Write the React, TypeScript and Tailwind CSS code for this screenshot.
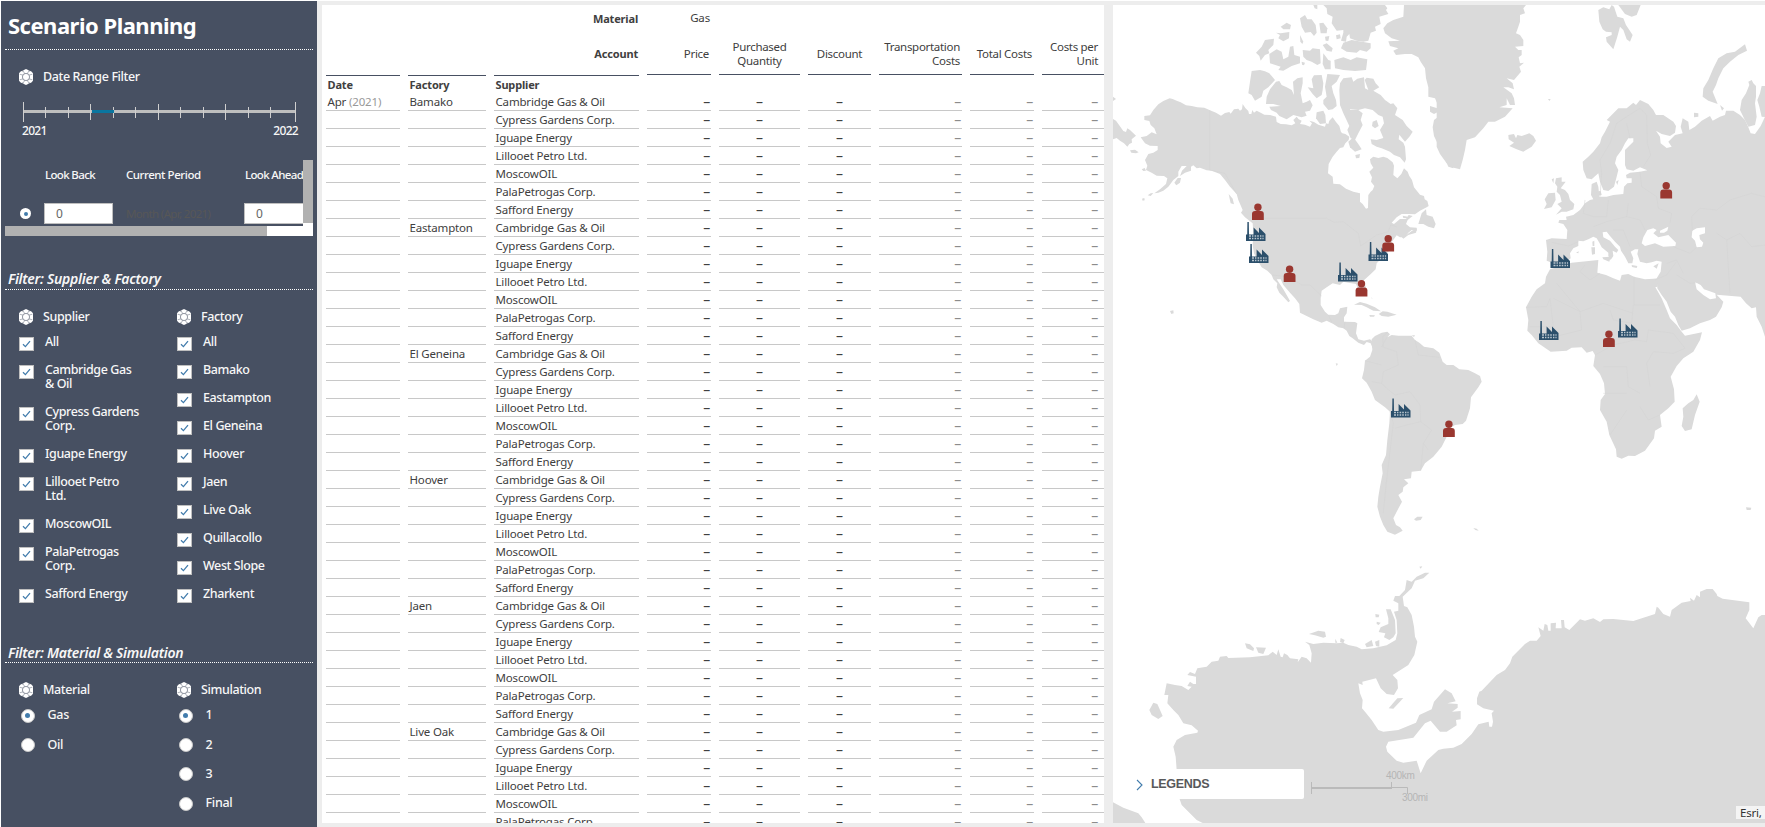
import React from "react";

const suppliers = [
  "Cambridge Gas & Oil",
  "Cypress Gardens Corp.",
  "Iguape Energy",
  "Lillooet Petro Ltd.",
  "MoscowOIL",
  "PalaPetrogas Corp.",
  "Safford Energy",
];

const factories = ["Bamako", "Eastampton", "El Geneina", "Hoover", "Jaen", "Live Oak"];

const supplierOptions: string[][] = [
  ["All"],
  ["Cambridge Gas", "& Oil"],
  ["Cypress Gardens", "Corp."],
  ["Iguape Energy"],
  ["Lillooet Petro", "Ltd."],
  ["MoscowOIL"],
  ["PalaPetrogas", "Corp."],
  ["Safford Energy"],
];

const factoryOptions: string[][] = [
  ["All"],
  ["Bamako"],
  ["Eastampton"],
  ["El Geneina"],
  ["Hoover"],
  ["Jaen"],
  ["Live Oak"],
  ["Quillacollo"],
  ["West Slope"],
  ["Zharkent"],
];

const rows = factories
  .flatMap((factory) => suppliers.map((supplier, i) => ({ factory: i === 0 ? factory : "", supplier })))
  .slice(0, 41);

const GRID =
  "grid grid-cols-[74px_78px_145px_64px_81px_63px_83px_64px_62px] gap-x-2";

function DimensionIcon() {
  return (
    <svg width="14" height="16" viewBox="0 0 14 16" className="shrink-0">
      <path d="M7 0 9.6 1.3 12.4 2.6 14 4.2V11.8L12.4 13.4 9.6 14.7 7 16 4.4 14.7 1.6 13.4 0 11.8V4.2L1.6 2.6 4.4 1.3Z" fill="#fff" />
      <g stroke="#475062" fill="none">
        <circle cx="7" cy="8" r="3.6" strokeWidth="0.7" strokeOpacity="0.85" />
        <path d="M3.9 6.1 0.6 5.2M10.1 6.1 13.4 5.2M3.9 9.9 0.6 10.8M10.1 9.9 13.4 10.8M5.6 4.6 4.6 2.6M8.4 4.6 9.4 2.6M5.6 11.4 4.6 13.4M8.4 11.4 9.4 13.4" strokeWidth="0.55" strokeOpacity="0.8" />
      </g>
      <g fill="#475062">
        <path d="M3.6 0.6 5 2.6 3 2.6ZM10.4 0.6 9 2.6 11 2.6ZM3.6 15.4 5 13.4 3 13.4ZM10.4 15.4 9 13.4 11 13.4Z" fillOpacity="0.6" />
      </g>
    </svg>
  );
}

function FilterTitle({ children }: { children: React.ReactNode }) {
  return (
    <div className="flex h-4 items-center gap-2.5">
      <DimensionIcon />
      <span className="pt-px text-[12.5px] font-medium tracking-[-0.38px] whitespace-nowrap">{children}</span>
    </div>
  );
}

function CheckOption({ lines }: { lines: string[] }) {
  return (
    <div className="flex gap-[11px] pb-3.5">
      <span className="mt-0.5 -mb-0.5 flex h-3.5 w-[15px] shrink-0 items-center justify-center border border-[#bfbfbf] bg-white">
        <svg width="9" height="8" viewBox="0 0 9 8">
          <path d="M1 4.3 3.4 6.6 8 1.2" fill="none" stroke="#427cac" strokeWidth="1.3" />
        </svg>
      </span>
      <div className="text-[12.5px] leading-[14px] font-medium tracking-[-0.4px] whitespace-nowrap">
        {lines.map((l) => (
          <div key={l}>{l}</div>
        ))}
      </div>
    </div>
  );
}

function RadioOption({ label, on }: { label: string; on?: boolean }) {
  return (
    <div className="flex h-[29.3px] items-center gap-[13px] pl-[1.5px]">
      <span className="flex size-[14px] items-center justify-center rounded-full border border-[#c8c8c8] bg-white">
        {on && <span className="size-[5px] rounded-full bg-[#427cac]" />}
      </span>
      <span className="text-[12.5px] font-medium tracking-[-0.3px]">{label}</span>
    </div>
  );
}

const ticks = [0, 22, 45, 67, 90, 112, 135, 157, 180, 202, 225, 247, 272];

function Sidebar() {
  return (
    <aside className="flex w-[316px] shrink-0 flex-col bg-[#475062] text-[#f7f7f7]">
      <div className="mx-1 flex h-[49px] shrink-0 items-center border-b border-dotted border-white pl-[3px]">
        <h1 className="text-[22px] font-bold tracking-[-0.5px] text-white">Scenario Planning</h1>
      </div>
      <div className="mt-[19px] pl-[18px]">
        <FilterTitle>Date Range Filter</FilterTitle>
      </div>
      <svg width="274" height="20" viewBox="0 0 274 20" className="mt-[17px] ml-[22px] shrink-0">
        <rect x="0" y="8" width="273" height="3" fill="#bfbfbf" />
        {ticks.map((x, i) => {
          const edge = i === 0 || i === 12;
          const major = i % 3 === 0;
          return (
            <rect key={x} x={x} y={edge ? 0 : major ? 2 : 5} width="1" height={edge ? 20 : major ? 16 : 11} fill="#cfcfcf" />
          );
        })}
        <rect x="69" y="8" width="22" height="3" fill="#0a76a0" />
      </svg>
      <div className="flex h-4 items-center justify-between pt-0.5 pr-[19px] pl-[21px] text-xs font-medium tracking-[-0.7px]">
        <span>2021</span>
        <span>2022</span>
      </div>
      <div className="mx-1 mt-[22px] flex h-[76px] shrink-0 flex-col">
        <div className="flex h-[66px]">
          <div className="w-[298px] overflow-hidden whitespace-nowrap">
            <div className="flex h-[26px] items-center pt-[3px] text-[11.5px] font-medium tracking-[-0.65px]">
              <span className="w-[81px] shrink-0 pl-10"><span>Look Back</span></span>
              <span className="ml-10 w-[119px] shrink-0 tracking-[-0.45px]">Current Period</span>
              <span className="shrink-0">Look Ahead</span>
            </div>
            <div className="mt-[17px] flex items-center text-xs">
              <span className="ml-[15px] flex size-[11px] shrink-0 items-center justify-center rounded-full bg-white">
                <span className="size-1 rounded-full bg-[#427cac]" />
              </span>
              <span className="ml-[13px] flex h-[21px] w-[69px] shrink-0 items-center border border-[#bfbfbf] bg-white pl-[11px] text-[#666]">
                0
              </span>
              <span className="ml-[13px] w-[118px] shrink-0 text-[11.5px] tracking-[-0.65px] text-[#575757]">Month (Apr, 2021)</span>
              <span className="flex h-[21px] w-[69px] shrink-0 items-center border border-[#bfbfbf] bg-white pl-[11px] text-[#666]">
                0
              </span>
            </div>
          </div>
          <div className="flex w-2.5 flex-col bg-white">
            <div className="h-[63px] bg-[#b1b1b1]" />
          </div>
        </div>
        <div className="h-2.5 bg-white">
          <div className="h-2.5 w-[262px] bg-[#b1b1b1]" />
        </div>
      </div>
      <div className="mx-1 flex h-[54px] shrink-0 items-end border-b border-dotted border-white pl-[3px]">
        <h2 className="text-sm leading-5 font-semibold tracking-[-0.27px] italic">Filter: Supplier &amp; Factory</h2>
      </div>
      <div className="flex h-[350px] shrink-0 pt-[19px] pl-[18px]">
        <div className="w-[158px]">
          <FilterTitle>Supplier</FilterTitle>
          <div className="mt-2.5">
            {supplierOptions.map((lines) => (
              <CheckOption key={lines[0]} lines={lines} />
            ))}
          </div>
        </div>
        <div>
          <FilterTitle>Factory</FilterTitle>
          <div className="mt-2.5">
            {factoryOptions.map((lines) => (
              <CheckOption key={lines[0]} lines={lines} />
            ))}
          </div>
        </div>
      </div>
      <div className="mx-1 flex h-[23px] shrink-0 items-end border-b border-dotted border-white pl-[3px]">
        <h2 className="text-sm leading-[18px] font-semibold tracking-[-0.27px] italic">Filter: Material &amp; Simulation</h2>
      </div>
      <div className="flex pt-[19px] pl-[18px]">
        <div className="w-[158px]">
          <FilterTitle>Material</FilterTitle>
          <div className="mt-[3px]">
            <RadioOption label="Gas" on />
            <RadioOption label="Oil" />
          </div>
        </div>
        <div>
          <FilterTitle>Simulation</FilterTitle>
          <div className="mt-[3px]">
            <RadioOption label="1" on />
            <RadioOption label="2" />
            <RadioOption label="3" />
            <RadioOption label="Final" />
          </div>
        </div>
      </div>
    </aside>
  );
}

function DataTable() {
  const head = "border-b border-[#475062] flex items-center h-[38px] leading-[14px] tracking-[-0.3px]";
  const cell = "border-b border-[#c8c8c8] h-[18px]";
  const dash = `${cell} text-sm leading-[18px]`;
  return (
    <section className="mt-1 ml-[5px] h-[818px] w-[782px] shrink-0 overflow-hidden bg-white pl-1 text-[11.5px] leading-[18px] tracking-[-0.17px] whitespace-nowrap text-[#404040]">
      <div className={`${GRID} h-8 pt-1`}>
        <div className="col-span-3 pr-px pt-px text-right text-[11px] font-bold">Material</div>
        <div className="pr-px text-right">Gas</div>
      </div>
      <div className={GRID}>
        <div className="col-span-3 grid grid-cols-[74px_78px_145px] gap-x-2">
          <div className="h-[39px] border-b border-[#475062]" />
          <div className="h-[39px] border-b border-[#475062]" />
          <div className="flex h-[39px] items-center justify-end border-b border-[#475062] pr-px pb-[5px] text-[11px] font-bold">Account</div>
        </div>
        <div className={`${head} justify-end pr-0.5 pb-1`}>Price</div>
        <div className={`${head} justify-center pb-1 text-center`}>Purchased<br />Quantity</div>
        <div className={`${head} justify-center pb-1`}>Discount</div>
        <div className={`${head} justify-end pr-0.5 pb-1 text-right`}>Transportation<br />Costs</div>
        <div className={`${head} justify-end pr-0.5 pb-1`}>Total Costs</div>
        <div className={`${head} justify-end pr-1.5 pb-1 text-right`}>Costs per<br />Unit</div>
      </div>
      <div className={`${GRID} h-[17px] text-[11px] leading-[17px] font-bold`}>
        <div className="pl-[1.5px]">Date</div>
        <div className="pl-[1.5px]">Factory</div>
        <div className="pl-[1.5px]">Supplier</div>
      </div>
      {rows.map((r, i) => (
        <div key={i} className={GRID}>
          <div className={`${cell} pl-[1.5px]`}>
            {i === 0 && (
              <>
                Apr <span className="text-[#999]">(2021)</span>
              </>
            )}
          </div>
          <div className={`${cell} pl-[1.5px]`}>{r.factory}</div>
          <div className={`${cell} pl-[1.5px]`}>{r.supplier}</div>
          <div className={`${dash} pr-px text-right`}>–</div>
          <div className={`${dash} text-center`}>–</div>
          <div className={`${dash} text-center`}>–</div>
          <div className={`${dash} pr-px text-right text-[#8c8c8c]`}>–</div>
          <div className={`${dash} pr-px text-right text-[#8c8c8c]`}>–</div>
          <div className={`${dash} pr-1.5 text-right text-[#8c8c8c]`}>–</div>
        </div>
      ))}
    </section>
  );
}

const americaNorth = [
  // mainland
  "179,295 188,297 200,302 212,307 228,316 245,318 262,322 283,323 300,331 318,338 333,347 345,339 358,336 362,341 372,328 385,326 390,332 396,328 398,312 406,324 415,333 417,342 424,342 427,330 432,338 440,332 452,338 463,344 480,345 498,350 500,366 512,372 528,373 545,376 556,370 550,360 560,350 566,358 575,362 570,372 585,374 600,380 606,370 598,362 612,366 625,374 645,380 648,370 655,372 658,362 668,352 678,366 688,378 693,396 697,400 706,402 718,410 716,420 706,430 700,442 690,444 680,455 668,470 656,492 654,520 668,530 670,551 690,553 708,566 730,575 750,580 750,605 758,612 768,626 774,624 775,585 782,575 788,570 793,558 783,545 786,532 778,515 790,503 782,490 780,478 790,470 805,474 820,470 832,474 848,487 852,497 850,525 862,535 874,522 882,505 893,515 898,528 906,540 912,562 924,577 930,584 942,588 944,598 952,603 956,618 950,622 930,632 915,643 895,642 875,642 860,652 845,668 852,672 870,657 888,657 896,645 908,648 893,660 888,672 900,682 920,683 920,693 905,690 895,698 885,712 870,712 860,706 848,722 836,735 830,748 838,752 825,765 800,790 797,808 780,824 760,842 768,862 770,880 765,888 755,885 745,868 738,852 715,848 700,845 690,855 668,850 650,862 635,872 632,895 632,915 645,935 655,944 675,945 685,940 690,925 712,920 710,940 702,952 702,965 735,966 742,970 738,1000 745,1018 762,1022 780,1018 795,1030 788,1045 782,1030 770,1026 762,1035 745,1028 728,1015 718,1008 710,992 700,985 685,982 670,972 650,962 635,968 610,958 590,948 570,938 568,912 555,895 540,878 520,855 512,838 500,838 508,850 520,868 530,885 540,903 535,907 520,890 508,878 500,862 502,850 490,838 485,825 472,812 455,802 445,785 432,760 428,735 430,700 428,670 405,652 393,638 398,630 385,600 380,582 360,560 345,540 330,522 305,512 290,511 270,503 260,505 250,496 243,500 243,512 225,518 210,528 216,512 230,498 215,498 205,515 205,528 190,540 175,560 160,572 145,578 133,580 150,568 168,552 172,535 162,528 140,527 125,518 108,510 112,497 105,480 115,462 130,458 143,450 143,438 120,437 105,430 92,412 110,408 125,397 140,403 133,385 122,375 118,363 103,360 103,348 120,346 130,330 145,313 160,303",
  "9,357 18,362 25,372 40,393 48,396 52,385 60,390 78,407 65,418 66,428 58,432 52,440 42,430 30,422 20,414 9,418",
  "9,290 18,297 9,303",
  "60,451 75,449 86,457 78,460 64,458",
  "95,508 104,504 108,512 100,513",
  "113,586 122,580 130,579 122,588",
  "96,596 103,594 104,601 98,602",
  "193,548 203,534 213,534 210,548 199,556",
  "180,933 190,931 191,940 184,942",
  "356,582 368,596 372,613 362,610",
  // Banks and Victoria
  "425,213 450,210 465,214 478,220 495,240 475,262 460,272 455,290 435,302 425,285 415,280 420,245",
  "480,268 498,245 508,243 515,255 530,262 545,270 552,285 549,245 562,235 578,232 578,250 572,280 578,310 590,305 600,300 608,316 600,332 585,335 590,347 575,352 550,345 530,358 508,348 500,338 483,330 478,320 512,318 490,312 468,312 470,290",
  "593,262 610,265 605,238 612,226 635,225 640,250 638,270 635,285 620,295 608,282",
  "652,222 690,225 680,245 665,258 670,280 678,300 680,318 668,328 655,330 640,312 640,300 650,290 645,260",
  "620,337 640,332 646,345 648,370 630,372 618,355",
  // Baffin
  "690,250 700,235 725,232 730,245 742,236 762,232 765,265 775,270 764,240 770,233 790,236 797,250 808,262 790,272 812,285 825,300 842,312 850,310 862,325 855,345 878,360 890,378 908,395 900,408 885,425 868,404 866,418 880,428 885,440 888,478 884,488 870,472 852,465 840,455 815,445 800,440 785,432 782,418 800,420 820,414 810,390 822,370 818,350 805,345 788,330 765,325 745,330 720,328 725,375 718,378 700,340 690,315 688,270",
  "712,330 745,330 758,340 752,360 758,375 745,400 735,420 722,415 712,390 722,370",
  "715,425 730,412 745,432 755,448 735,455 720,442",
  "788,365 800,360 806,378 795,385 786,378",
  "736,465 750,462 748,474 738,475",
  // Devon, Ellesmere and the Queen Elizabeth group
  "673,180 700,172 722,180 740,172 772,178 770,195 768,210 735,213 700,210 675,205",
  "640,15 825,15 832,25 828,30 835,42 808,50 812,72 795,80 798,92 782,98 775,122 760,125 740,122 720,115 718,102 710,110 708,125 693,122 700,98 700,90 680,92 665,70 668,50 652,42 650,25",
  "700,128 725,120 782,130 782,145 770,155 750,150 740,158 710,155 693,145",
  "570,55 585,45 592,58 605,58 617,75 620,98 612,108 602,96 585,98 575,80",
  "512,80 530,68 543,75 540,88 520,88",
  "498,98 512,100 538,96 537,115 520,124 505,115 510,105",
  "438,158 455,140 465,120 492,116 490,135 475,150 478,160 465,165 452,182 448,168",
  "478,162 500,148 515,155 520,178 535,170 540,140 550,138 553,165 570,170 570,190 545,198 520,212 505,210 512,200 480,190",
  "578,150 600,152 608,145 630,148 632,190 622,195 605,185 590,180 580,170",
  "638,135 650,130 668,145 665,155 650,152",
  "640,160 655,180 662,182 662,208 645,208 638,192",
  "628,70 640,68 652,85 650,100 632,100",
  "570,105 580,125 577,132 571,125",
  "575,185 585,188 582,196 576,194",
  "645,110 658,108 655,123 647,122",
  "610,15 622,15 622,28 614,25",
  "678,106 690,103 692,115 680,118",
  // Newfoundland, Anticosti, Nova Scotia
  "925,672 935,640 948,628 950,645 968,650 977,672 972,685 955,680 940,672",
  "870,706 885,708 905,693 921,685 918,698 895,705 880,716",
  "878,647 893,650 890,655 880,654",
  // west Greenland
  "882,15 880,50 850,60 832,70 820,85 825,100 845,115 870,122 835,124 840,138 865,145 850,152 858,165 885,162 905,162 925,172 932,185 945,205 948,235 955,262 955,290 975,295 985,318 990,340 985,350 972,360 968,382 972,408 985,435 1000,465 1015,500 1030,505 1030,15",
  "960,318 982,325 985,335 972,342 960,335",
];

const eurasia = [
  // east Greenland
  "-10,15 258,15 250,25 255,40 240,45 240,65 235,80 228,100 240,105 250,120 250,138 225,140 235,150 245,150 245,165 236,172 240,190 252,188 238,200 243,215 222,240 200,235 218,250 222,268 205,262 190,262 215,280 222,295 225,315 210,315 200,295 200,315 178,322 218,325 195,350 165,365 145,365 130,385 105,412 80,420 75,450 68,480 60,508 35,502 20,490 0,462 -10,440",
  "205,405 222,402 228,415 232,405 245,408 268,400 280,408 288,422 275,440 250,455 230,448 208,438 222,428 206,418",
  "475,30 490,22 508,28 515,15 522,20 532,50 550,55 558,75 578,105 570,125 560,118 550,90 540,80 532,110 520,148 500,125 498,112 515,105 515,97 498,95 488,88 478,65",
  "535,15 602,15 590,45 575,50 555,42",
  "915,133 921,152 895,165 870,185 850,205 835,235 828,255 818,275 833,312 805,302 788,290 790,265 805,240 820,205 835,175 860,160 885,155",
  "762,338 775,340 775,350 762,352",
  "324,297 332,297 328,303",
  // mainland
  "600,300 625,312 640,330 648,345 670,345 700,365 708,378 705,398 690,408 665,402 648,392 660,410 662,430 680,444 695,440 685,425 705,405 728,400 722,380 728,355 745,365 748,390 765,380 785,362 810,348 818,362 840,350 855,345 858,332 880,332 900,345 915,360 925,382 932,400 945,402 962,378 975,350 985,350 985,1010 975,1010 965,980 950,950 948,922 935,925 918,910 902,890 830,884 850,905 845,922 828,950 810,960 780,970 750,985 725,992 715,975 705,950 692,935 680,905 665,885 652,865 650,835 662,815 665,785 650,782 635,787 620,790 600,785 592,762 595,748 585,748 572,755 580,775 577,790 565,790 555,770 543,752 540,740 525,725 510,708 500,695 488,697 490,712 510,722 525,740 535,750 530,758 518,752 520,768 512,780 505,768 505,758 485,742 478,728 470,715 460,710 445,718 430,724 415,722 415,738 400,745 390,760 392,775 380,785 360,790 340,790 320,782 322,755 318,720 335,715 380,717 382,690 370,672 355,668 358,660 380,660 378,650 400,645 420,630 435,610 450,600 460,598 453,585 455,552 470,545 475,560 478,590 500,590 520,585 550,582 552,560 562,550 575,548 575,535 560,535 558,525 570,518 600,515 622,511 600,502 580,512 560,508 555,495 555,450 580,425 580,415 565,415 555,430 545,450 530,470 525,490 535,510 530,530 522,560 505,573 490,570 480,545 475,520 455,538 440,535 430,510 428,485 445,470 460,455 480,430 485,412 495,395 510,365 500,360 515,345 535,325 560,325 580,308 588,315",
  "900,330 905,300 918,280 928,255 925,245 935,240 940,250 948,258 948,290 945,310 950,350 945,375 925,380 912,355",
  "965,258 985,258 985,352 965,350 958,320 952,300 960,280",
  "840,315 852,325 846,332",
  // British Isles
  "348,535 365,532 365,545 377,545 362,565 375,570 385,582 390,600 403,612 400,628 380,635 365,635 348,644 365,625 352,612 365,605 360,585 350,575 352,560 345,550",
  "325,580 345,578 347,600 335,622 312,627 320,612 314,598",
  "335,538 342,535 340,550",
  // Mediterranean islands and Baltic
  "487,772 512,770 508,785 490,778",
  "454,742 465,742 465,762 456,764",
  "457,725 463,722 463,738 458,738",
  "575,795 592,798 590,804 576,801",
  "640,799 656,790 650,806",
  "408,758 416,754 415,760",
  "470,575 482,572 485,585 473,588",
  "528,545 536,540 532,555",
];

const africa = [
  "150,148 215,128 295,120 292,158 318,165 340,175 360,182 365,165 385,162 402,170 435,178 460,176 475,175 472,200 466,202 485,235 500,270 510,295 530,315 545,335 555,347 606,337 600,360 580,395 550,415 530,438 512,470 522,508 524,545 505,565 480,585 485,620 465,632 462,655 435,692 405,708 385,707 365,716 350,710 348,688 328,645 320,605 300,570 302,540 315,522 312,490 300,462 280,438 285,405 278,393 260,398 245,382 215,383 200,392 152,395 115,370 95,345 82,332 85,300 78,262 95,230 110,208 135,190 138,170",
  "590,523 599,545 585,585 575,628 555,633 545,618 550,590 548,565 565,550 580,540",
];

const americaSouth = [
  "215,118 225,108 245,98 262,95 270,103 262,112 275,105 295,107 335,107 345,120 358,128 372,140 400,145 418,158 428,185 440,195 460,195 478,208 505,210 525,220 540,228 545,245 535,262 513,292 510,325 498,362 488,372 465,375 450,385 440,410 425,440 400,470 375,490 362,512 335,515 333,535 312,538 325,550 310,562 308,575 295,585 306,605 290,635 280,655 288,675 300,682 308,692 285,704 262,695 250,675 240,650 232,620 235,590 240,560 248,520 245,495 258,465 262,420 268,370 270,335 255,322 225,300 215,275 200,248 186,235 192,210 195,182 210,170 217,150",
  "162,14 180,6 200,11 225,22 243,34 220,32 200,22 185,15",
  "236,42 248,34 262,35 290,44 265,50 245,48",
  "208,45 225,46 222,50 210,50",
  "335,106 345,106 342,111",
  "107,190 114,191 110,198",
  "342,658 352,650 368,650 362,660 348,662",
  "520,684 530,686 536,692 526,690",
  "1338,622 1354,623 1352,630 1340,630",
  "212,-8 216,-6 218,-2",
];

const antarctica = [
  "958,98 940,115 915,122 905,145 878,170 882,198 892,202 905,225 912,260 915,290 922,305 913,345 895,375 848,405 862,420 864,445 852,465 830,462 812,445 798,415 757,425 758,435 745,430 750,460 758,480 756,505 765,515 785,540 805,570 820,575 865,570 918,548 928,525 965,508 972,485 1005,448 1025,460 1037,484 1012,490 1043,492 1043,503 1026,515 1052,513 1052,538 1038,540 1040,556 1010,575 990,575 962,542 945,550 910,593 835,605 828,620 832,635 860,662 880,668 920,662 932,700 950,662 985,630 1000,626 1030,623 1055,612 1085,582 1105,553 1136,545 1138,560 1146,560 1149,545 1145,520 1152,512 1120,505 1101,493 1101,475 1108,455 1115,452 1160,405 1185,390 1200,370 1207,350 1245,312 1260,302 1280,302 1292,288 1285,262 1300,272 1304,252 1312,255 1315,272 1322,272 1322,250 1338,248 1337,265 1355,265 1353,240 1362,240 1364,262 1378,270 1410,238 1425,242 1450,235 1470,246 1480,238 1510,237 1570,243 1635,222 1640,200 1645,203 1660,222 1680,230 1685,210 1715,188 1742,183 1740,173 1752,182 1760,165 1770,172 1770,155 1790,147 1808,147 1820,162 1822,168 1838,176 1918,187 1918,210 1907,235 1930,265 1945,232 1955,225 1975,225 1975,860 300,860 260,840 215,795 208,775 200,690 197,650 190,620 200,600 225,585 262,578 264,572 245,556 220,550 205,525 190,510 172,490 175,465 163,465 170,430 195,435 215,438 235,450 245,440 232,438 240,425 250,432 258,432 258,410 232,405 240,396 255,402 262,385 290,380 305,365 325,362 330,350 350,348 355,354 420,352 475,346 488,335 500,345 505,328 512,350 518,352 522,340 532,345 540,355 565,358 563,367 575,350 590,355 603,368 605,340 598,315 585,305 610,312 640,308 680,310 700,308 715,315 740,320 755,328 790,325 830,316 857,300 862,280 860,240 852,215 865,212 865,190 850,182 855,168 868,168 885,150 890,120 905,125 920,110 945,98",
  "118,510 130,488 142,492 158,528 145,537 125,525",
  "405,310 420,313 432,325 430,333 410,325",
  "438,322 468,323 460,342 445,338",
  "597,282 625,272 645,275 648,290 640,293 615,286",
  "836,505 862,475 880,474 850,506",
  "828,208 842,208 855,240 857,280 850,292 838,300 822,292 826,280 806,276 812,262 835,252 835,235",
  "796,222 808,224 806,232 797,232",
  "800,245 812,248 806,255 800,252",
  "676,296 682,308 676,308",
  "692,294 704,300 700,310 690,306",
  "765,312 785,300 790,318 770,322",
  "795,305 808,300 808,320 798,318",
  "928,80 937,79 932,86",
  "9,787 40,803 85,820 95,832 108,852 9,852",
];

const inlandWater = [
  "622,690 640,685 650,690 640,700 655,712 685,705 708,728 706,738 670,740 645,730 615,738 605,730 610,712",
  "660,692 685,680 682,692 672,698 660,698",
  "757,692 770,685 795,682 795,700 778,705 780,718 790,728 786,740 770,742 765,722 755,712",
  "765,846 782,855 792,868 805,872 826,880 828,895 810,898 790,885 770,868",
];

const borders: { t: string; d: string }[] = [
  {
    t: "translate(1110 0) scale(.33333)",
    d: "M299 331V510L345 520 380 582M430 655H650L672 667 700 665 745 700 752 738 800 705 835 695 842 675 860 680M485 825 515 828 545 835 575 855 600 855 635 888M655 945 665 965M702 985 705 965M820 1040 818 1010 832 998",
  },
  {
    t: "translate(1440 0) scale(.33333)",
    d: "M480 590 485 520 480 480 510 430 530 370 560 350 600 325 620 345 622 430 632 465 610 500M570 415 560 370M435 600 430 640 460 650 500 650 505 600M460 680 500 665 560 650 565 610M560 650 600 660 615 690M520 690 550 690 570 740M600 515 605 560 650 590 655 625 695 640 690 670M755 650 780 625 830 630 870 600 935 580 975 590M755 650 757 692M830 700 860 720 900 700 935 740 975 735M700 740 750 760 770 742M680 790 710 780 730 820M860 720 865 800 870 880M335 727 385 738 415 725",
  },
  {
    t: "translate(1500 220) scale(.33333)",
    d: "M402 170V255H480M255 135 240 155 270 180 300 160M78 262 140 260 150 235 160 320 90 320M160 235 240 275 310 250 400 280M170 190 240 275M400 255 395 310 340 300 330 270M395 310 405 360 440 365M240 275 245 330 165 350M440 365 445 330 520 340 555 385 520 400 460 395 440 430 450 500M285 405 340 375 405 360M310 440 380 440 385 500 420 520M380 520 310 520M380 570 330 645M420 560 445 600 480 585M465 180 500 165 530 125M530 165 570 190 590 188",
  },
  {
    t: "translate(1300 300) scale(.33333)",
    d: "M262 110 245 140 290 155 295 195 250 215 245 250 215 245M195 182 245 195M345 120 355 165 418 172M245 250 260 265 285 285 330 275 360 315 362 365 395 390 370 430 385 450M270 335 280 370 260 540 250 640M362 365 320 375 285 385M370 430 362 512",
  },
];

const factoryPins = [
  [1246, 222],
  [1249, 244],
  [1338, 262.5],
  [1368.5, 242],
  [1550.5, 249],
  [1539, 321],
  [1618, 318.5],
  [1391, 398.5],
];

const supplierPins = [
  [1252, 203.5],
  [1283.7, 265.5],
  [1382.3, 235],
  [1355.6, 280],
  [1660.3, 182],
  [1603, 330.5],
  [1443, 420.5],
];

function Land({ t, shapes, fill = "#dadada" }: { t: string; shapes: string[]; fill?: string }) {
  return (
    <g transform={t} fill={fill}>
      {shapes.map((p, i) => (
        <polygon key={i} points={p} />
      ))}
    </g>
  );
}

function WorldMap() {
  return (
    <svg width="652" height="818" viewBox="1113 5 652 818" className="block">
      <Land t="translate(1110 0) scale(.33333)" shapes={americaNorth} />
      <Land t="translate(1300 300) scale(.33333)" shapes={americaSouth} />
      <Land t="translate(1440 0) scale(.33333)" shapes={eurasia} />
      <Land t="translate(1500 220) scale(.33333)" shapes={africa} />
      <Land t="translate(1110 540) scale(.33333)" shapes={antarctica} />
      <Land t="translate(1440 0) scale(.33333)" shapes={inlandWater} fill="#fff" />
      <g fill="none" stroke="#d4d4d4" strokeWidth="1.6" strokeLinejoin="round">
        {borders.map((b) => (
          <path key={b.t} transform={b.t} d={b.d} />
        ))}
      </g>
      {factoryPins.map(([x, y]) => (
        <g key={`${x}-${y}`} transform={`translate(${x} ${y})`}>
          <path d="M0 19V12.5H1.2L1.4 0H2.8L3 12.5H7.6V5.5L13 11V5.5L19.5 12V19Z" fill="#2b4f6b" />
          <path
            d="M3 14H5M6 14H7.4M8.6 14H10.2M11.2 14H12.8M14 14H15.4M16.4 14H17.6M3 16.5H5M6 16.5H7.4M8.6 16.5H10.2M11.2 16.5H12.8M14 16.5H15.4M16.4 16.5H17.6"
            stroke="#b9c5ce"
            strokeWidth="1.5"
          />
        </g>
      ))}
      {supplierPins.map(([x, y]) => (
        <g key={`${x}-${y}`} transform={`translate(${x} ${y})`} fill="#9a3730">
          <circle cx="5.9" cy="3.8" r="3.7" />
          <path d="M0 16.6V10.4Q0 7.4 3 7.4H8.8Q11.8 7.4 11.8 10.4V16.6Z" />
        </g>
      ))}
      <g stroke="#bababa" fill="none">
        <path d="M1311.5 782V794M1391.5 782V788M1391.5 787.5H1407.5V794" />
        <path d="M1311 788H1392" strokeWidth="1.8" />
      </g>
    </svg>
  );
}

function MapPanel() {
  return (
    <section className="relative mt-1 ml-[9px] h-[818px] w-[652px] shrink-0 overflow-hidden bg-white">
      <WorldMap />
      <div className="absolute top-[764px] left-[11px] flex h-[30px] w-[180px] items-center rounded-[2px] bg-white pl-[12px]">
        <svg width="7" height="12" viewBox="0 0 7 12" className="mt-0.5">
          <path d="M1 1 6 6 1 11" fill="none" stroke="#427cac" strokeWidth="1.1" />
        </svg>
        <span className="ml-[8px] font-['Liberation_Sans'] text-[12.5px] font-bold tracking-[-0.3px] text-[#58595b]">LEGENDS</span>
      </div>
      <span className="absolute top-[764px] left-[273px] font-['Liberation_Sans'] text-[10px] leading-[14px] tracking-[-0.3px] text-[#b5b5b5]">400km</span>
      <span className="absolute top-[786px] left-[289px] font-['Liberation_Sans'] text-[10px] leading-[14px] tracking-[-0.3px] text-[#b5b5b5]">300mi</span>
      <span className="absolute right-0 bottom-1 flex h-[13px] w-[29px] items-center bg-white/70 pl-1 text-[11.5px] tracking-[-0.2px] text-[#323232]">Esri,</span>
    </section>
  );
}

export default function App() {
  return (
    <div className="h-[827px] w-[1765px] overflow-hidden bg-white pt-px pl-px font-['Noto_Sans',sans-serif]">
      <div className="flex h-[826px] bg-[#ededed]">
        <Sidebar />
        <DataTable />
        <MapPanel />
      </div>
    </div>
  );
}
